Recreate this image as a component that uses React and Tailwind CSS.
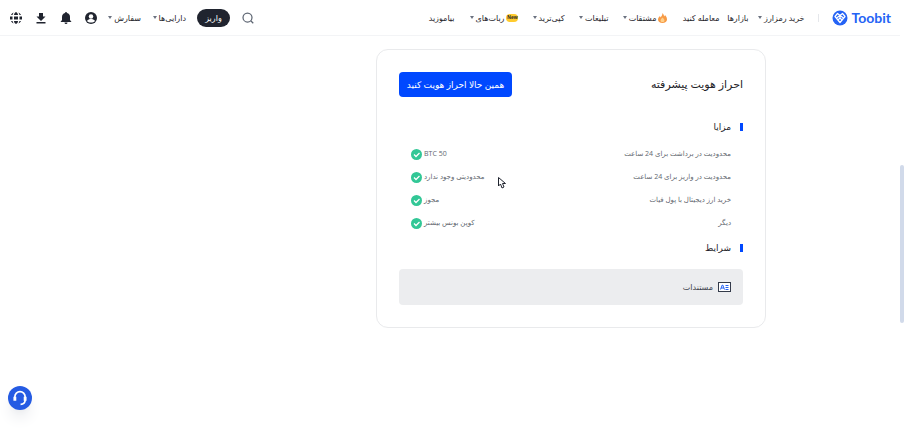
import React from "react";

const navItems = [
  { label: "خرید رمزارز", caret: true, width: "w-[44px]" },
  { label: "بازارها", width: "w-[19px]", space: "mr-3" },
  { label: "معامله کنید", width: "w-[38px]", space: "mr-[10px]" },
  { label: "مشتقات", caret: true, badge: "fire", width: "w-[44px]", space: "mr-[14px]" },
  { label: "تبلیغات", caret: true, width: "w-[30px]", space: "mr-[15px]" },
  { label: "کپی‌ترید", caret: true, width: "w-[31px]", space: "mr-[14px]" },
  { label: "ربات‌های", caret: true, badge: "new", width: "w-[49px]", space: "mr-[15px]" },
  { label: "بیاموزید", width: "w-[26px]", space: "mr-[15px]" },
];

const benefits = [
  { label: "محدودیت در برداشت برای 24 ساعت", value: "50 BTC" },
  { label: "محدودیت در واریز برای 24 ساعت", value: "محدودیتی وجود ندارد" },
  { label: "خرید ارز دیجیتال با پول فیات", value: "مجوز" },
  { label: "دیگر", value: "کوپن بونس بیشتر" },
];

function Logo() {
  return (
    <a href="#" className="flex items-center gap-[3px] text-[#2563f5]" dir="ltr">
      <svg className="h-4 w-4" viewBox="0 0 32 32" fill="none">
        <circle cx="16" cy="16" r="15" fill="currentColor" />
        <g stroke="white" strokeWidth="2.500" strokeLinejoin="round">
          <path d="M16 11 11 7 6 13 16 25 26 13 21 7Z" />
          <path d="m9 16 7-5 7 5M16 11v4M12 20l4-4 4 4" />
        </g>
      </svg>
      <span className="font-['Lato',sans-serif] text-[14px] leading-4 font-bold">Toobit</span>
    </a>
  );
}

function Caret() {
  return (
    <svg className="h-[3px] w-1 shrink-0" viewBox="0 0 4 3" fill="#6b7280">
      <path d="M0 0h4L2 3Z" />
    </svg>
  );
}

function Fire() {
  return (
    <svg className="h-[10px] w-[9px] shrink-0" viewBox="0 0 18 20">
      <path fill="#f79a45" d="M9 0c2 3 3 4 3 7 1-1 2-2 2-3 3 3 4 6 4 9 0 4-4 7-9 7s-9-3-9-7c0-3 2-5 4-7l1 3c2-3 4-5 4-9Z" />
      <path fill="#ffd08a" d="M9 9c2 2 4 4 4 6s-2 3-4 3-4-1-4-3 2-4 4-6Z" />
    </svg>
  );
}

function NavLink({ item }) {
  return (
    <a
      href="#"
      className={`flex shrink-0 items-center gap-[2px] whitespace-nowrap hover:text-blue-600 ${item.width} ${item.space || ""}`}
    >
      {item.badge === "fire" && <Fire />}
      {item.badge === "new" && (
        <span className="flex h-2 w-3 shrink-0 items-center justify-center rounded-full bg-[#ffcb2e] font-['Liberation_Sans',sans-serif] text-[5px] font-bold">
          New
        </span>
      )}
      <span>{item.label}</span>
      {item.caret && <Caret />}
    </a>
  );
}

function Header() {
  return (
    <header className="mr-1 flex h-9 items-center justify-between border-b border-[#f3f4f6] pr-[9px] pl-[10px] text-[8px] text-[#1e2329]">
      <div className="flex items-center">
        <Logo />
        <span className="mr-[13px] ml-[14px] h-2 w-px bg-gray-200" />
        <nav className="flex items-center">
          {navItems.map((item) => (
            <NavLink key={item.label} item={item} />
          ))}
        </nav>
      </div>
      <div className="flex items-center">
        <button aria-label="جستجو">
          <svg className="h-3 w-3" viewBox="0 0 24 24" fill="none" stroke="#5d6572" strokeWidth="2.500">
            <circle cx="11" cy="11" r="9" />
            <path d="m17.500 17.500 5 5" />
          </svg>
        </button>
        <button className="mr-3 h-[18px] w-[33px] rounded-full bg-[#20242f] text-white">واریز</button>
        <NavLink item={{ label: "دارایی‌ها", caret: true, width: "w-[33px]", space: "mr-[11px]" }} />
        <NavLink item={{ label: "سفارش", caret: true, width: "w-[30px]", space: "mr-3" }} />
        <div className="mr-[14px] flex items-center gap-[13px] text-[#20242f]">
          <button aria-label="حساب کاربری">
            <svg className="h-3 w-3" viewBox="0 0 24 24" fill="currentColor">
              <circle cx="12" cy="12" r="12" />
              <circle cx="12" cy="9" r="4.500" fill="white" />
              <path fill="white" d="M4 18c2-3 5-4 8-4s6 1 8 4c-2 2-5 3-8 3s-6-1-8-3Z" />
            </svg>
          </button>
          <button aria-label="اعلان‌ها">
            <svg className="h-3 w-3" viewBox="0 0 24 24" fill="currentColor">
              <path d="M12 0a2 2 0 0 1 2 2c4 1 6 4 6 8v6l3 4H1l3-4v-6c0-4 2-7 6-8a2 2 0 0 1 2-2ZM9 21h6a3 3 0 0 1-6 0Z" />
            </svg>
          </button>
          <button aria-label="دانلود">
            <svg className="h-3 w-3" viewBox="0 0 24 24" fill="currentColor">
              <path d="M8 2h8v7h5l-9 9-9-9h5ZM3 20h18v3H3Z" />
            </svg>
          </button>
          <button aria-label="زبان">
            <svg className="h-3 w-3" viewBox="0 0 24 24" fill="currentColor">
              <path d="M8 6c0-3 2-5 4-6 2 1 4 3 4 6ZM8 18h8c0 3-2 5-4 6-2-1-4-3-4-6Z" />
              <path d="M8 9h8v6H8ZM0 9h5v6H0ZM19 9h5v6h-5Z" />
              <path d="M2 6c1-2 3-4 5-5L5 6ZM22 6c-1-2-3-4-5-5l2 5ZM2 18c1 2 3 4 5 5l-2-5ZM22 18c-1 2-3 4-5 5l2-5Z" />
            </svg>
          </button>
        </div>
      </div>
    </header>
  );
}

function SectionTitle({ children }) {
  return (
    <div className="flex items-center gap-[9px]">
      <span className="h-2 w-[3px] bg-[#0048ff]" />
      <h3 className="text-[9px] leading-4 text-[#1e2329]">{children}</h3>
    </div>
  );
}

function CheckIcon() {
  return (
    <svg className="h-[11px] w-[11px] shrink-0" viewBox="0 0 22 22" fill="none">
      <circle cx="11" cy="11" r="11" fill="#32c796" />
      <path d="m6 11 4 4 7-7" stroke="white" strokeWidth="2.500" />
    </svg>
  );
}

function VerificationCard() {
  return (
    <section className="flex-1 rounded-xl border border-[#e9eaec] px-[22px] pt-[22px] pb-[22px]">
      <div className="flex items-center justify-between">
        <h2 className="text-[11px] text-[#1e2329]">احراز هویت پیشرفته</h2>
        <button className="h-[25px] w-[113px] rounded-[4px] bg-[#0048ff] text-[9px] whitespace-nowrap text-white">
          همین حالا احراز هویت کنید
        </button>
      </div>
      <div className="mt-[22px]">
        <SectionTitle>مزایا</SectionTitle>
      </div>
      <dl className="mt-2 pr-3 pl-3 text-[7px] text-[#62676f]">
        {benefits.map((row) => (
          <div key={row.label} className="flex h-[23px] items-center justify-between">
            <dt>{row.label}</dt>
            <dd className="flex items-center gap-[2px]">
              <span>{row.value}</span>
              <CheckIcon />
            </dd>
          </div>
        ))}
      </dl>
      <div className="mt-[5px]">
        <SectionTitle>شرایط</SectionTitle>
      </div>
      <div className="mt-[13px] flex h-9 items-center gap-[5px] rounded bg-[#ecedef] px-3 text-[8px] text-[#3c424c]">
        <svg className="h-[10px] w-[13px]" viewBox="0 0 26 20" fill="none">
          <rect x="1" y="1" width="24" height="18" fill="white" stroke="#343b4a" strokeWidth="2" />
          <path d="m5 15 3.500-9h1L13 15M6 12h6M15 7h6M15 11h6M15 15h6" stroke="#2563f5" strokeWidth="2" />
        </svg>
        <span>مستندات</span>
      </div>
    </section>
  );
}

function App() {
  return (
    <div
      dir="rtl"
      className="relative min-h-screen overflow-hidden bg-white font-['Open_Sans','DejaVu_Sans',sans-serif]"
    >
      <Header />
      <main className="flex pt-[13px] pr-[138px] pl-[376px]">
        <VerificationCard />
      </main>
      <button
        aria-label="پشتیبانی"
        className="absolute bottom-[26px] left-2 flex h-6 w-6 items-center justify-center rounded-full bg-[#255be3] shadow-lg shadow-gray-200"
      >
        <svg className="h-4 w-4" viewBox="0 0 28 28" fill="none" stroke="white" strokeWidth="3">
          <path d="M5 14v-2a9 9 0 0 1 18 0v5c0 5-3 8-8 8" />
          <path d="M5 12v7M23 12v7" strokeWidth="5" />
        </svg>
      </button>
      <div className="absolute top-[165px] right-0 h-[158px] w-1 rounded-full bg-[#d1daea]" />
      <svg className="absolute top-[177px] left-[498px] h-3 w-2" viewBox="0 0 16 24" fill="white" stroke="#20242f" strokeWidth="2">
        <path d="M1 1v17l4-4 3 8 4-2-3-7h6Z" />
      </svg>
    </div>
  );
}

export default App;
